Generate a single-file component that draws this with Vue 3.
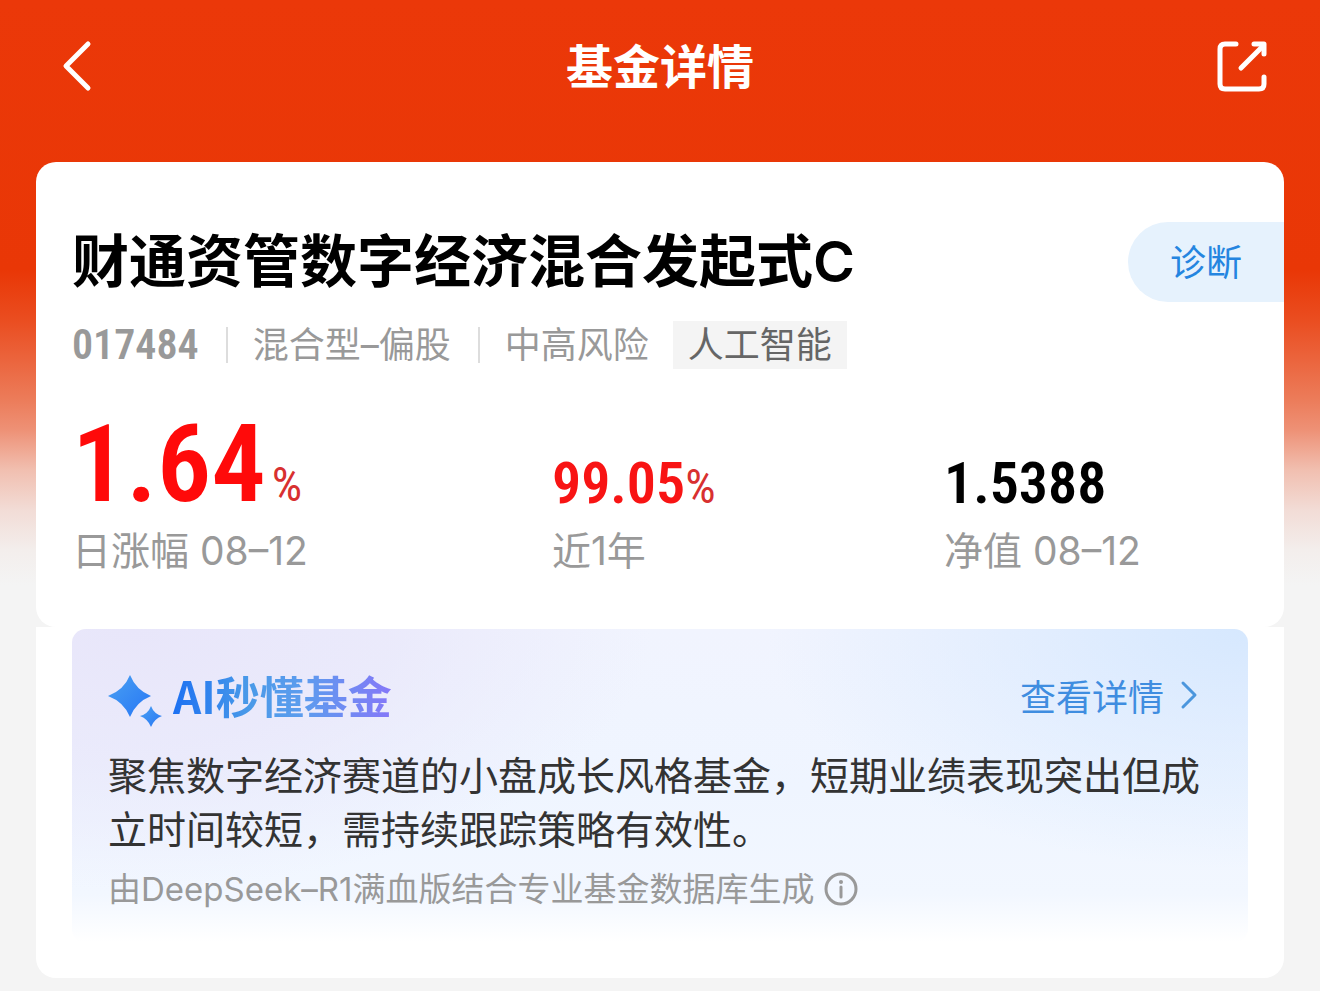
<script setup>
const fund = {
  name: '财通资管数字经济混合发起式C',
  code: '017484',
  type: '混合型–偏股',
  risk: '中高风险',
  theme: '人工智能',
}
const summary = '聚焦数字经济赛道的小盘成长风格基金，短期业绩表现突出但成立时间较短，需持续跟踪策略有效性。'
</script>

<template>
  <div class="page">
    <header class="bar">
      <button class="icon-btn back" type="button" aria-label="返回">
        <svg width="32" height="54" viewBox="0 0 32 54" fill="none" stroke="#fff" stroke-width="5" stroke-linecap="round" stroke-linejoin="round">
          <path d="M28 4 L6 26 L28 48" />
        </svg>
      </button>
      <h1>基金详情</h1>
      <button class="icon-btn share" type="button" aria-label="分享">
        <svg width="54" height="54" viewBox="0 0 54 54" fill="none" stroke="#fff" stroke-width="5" stroke-linecap="round" stroke-linejoin="round">
          <path d="M20 4 H9 Q4 4 4 9 V44 Q4 49 9 49 H43 Q48 49 48 44 V37" />
          <path d="M38 4 H48 V14" />
          <path d="M25 28 L47 6" />
        </svg>
      </button>
    </header>

    <main>
      <section class="card">
        <div class="title-row">
          <h2>{{ fund.name }}</h2>
          <button class="diagnose" type="button">诊断</button>
        </div>
        <div class="meta">
          <span class="code">{{ fund.code }}</span>
          <span class="field">{{ fund.type }}</span>
          <span class="field">{{ fund.risk }}</span>
          <span class="tag">{{ fund.theme }}</span>
        </div>
        <dl class="stats">
          <div class="stat">
            <dt>日涨幅 08–12</dt>
            <dd class="up big">1.64<span class="pct">%</span></dd>
          </div>
          <div class="stat">
            <dt>近1年</dt>
            <dd class="up">99.05<span class="pct">%</span></dd>
          </div>
          <div class="stat">
            <dt>净值 08–12</dt>
            <dd>1.5388</dd>
          </div>
        </dl>
      </section>

      <section class="ai-card">
        <div class="panel">
          <div class="panel-head">
            <svg class="spark" width="56" height="56" viewBox="0 0 56 56">
              <defs>
                <linearGradient id="spark" x1="0" y1="0" x2="1" y2="1">
                  <stop offset="0" stop-color="#4aa0f2" />
                  <stop offset="1" stop-color="#2676f5" />
                </linearGradient>
              </defs>
              <path fill="url(#spark)" d="M22 4 Q28 19 43 25 Q28 31 22 46 Q16 31 0 25 Q16 19 22 4Z" />
              <path fill="url(#spark)" d="M43 35 Q46 43 54 45 Q46 48 43 56 Q40 48 32 45 Q40 43 43 35Z" />
            </svg>
            <h3>AI秒懂基金</h3>
            <a class="more" href="#">
              查看详情
              <svg width="18" height="30" viewBox="0 0 18 30" fill="none" stroke="#4b96dd" stroke-width="3" stroke-linecap="round" stroke-linejoin="round">
                <path d="M3 3 L15 15 L3 27" />
              </svg>
            </a>
          </div>
          <p class="summary">{{ summary }}</p>
          <p class="source">
            由DeepSeek–R1满血版结合专业基金数据库生成
            <button class="info" type="button" aria-label="说明">
              <svg width="34" height="34" viewBox="0 0 34 34" fill="none" stroke="#999" stroke-width="3">
                <circle cx="17" cy="17" r="15" />
                <path d="M17 15 V25" stroke-linecap="round" />
                <circle cx="17" cy="10" r="2" fill="#999" stroke="none" />
              </svg>
            </button>
          </p>
        </div>
      </section>
    </main>
  </div>
</template>

<style>
body {
  margin: 0;
  background: #f4f4f4;
}
</style>

<style scoped>
.page {
  font-family: Inter, "Noto Sans CJK SC", sans-serif;
  background: linear-gradient(180deg, #eb3809 0, #e93706 270px, #ea4d20 320px, #ec7c5a 400px, #ee9176 430px, #f1bfb0 470px, #f2dcd6 510px, #f3eeec 550px, #f4f4f4 585px);
  color: #000;
  padding-bottom: 13px;
}
h1, h2, h3, p, dl, dd {
  margin: 0;
}
button {
  font: inherit;
  border: 0;
  padding: 0;
  background: none;
  cursor: pointer;
}
.icon-btn svg,
.info svg {
  display: block;
}
.bar {
  display: grid;
  grid-template-columns: 1fr auto 1fr;
  align-items: center;
  height: 134px;
  padding: 0 50px;
}
.back {
  justify-self: start;
  padding-left: 10px;
}
.share {
  justify-self: end;
}
h1 {
  font-size: 47px;
  line-height: 64px;
  font-weight: 700;
  color: #fff;
}
main {
  padding: 28px 36px 0;
}
.card {
  background: #fff;
  border-radius: 20px;
  padding: 60px 0 52px 36px;
}
.title-row {
  display: flex;
  align-items: center;
  justify-content: space-between;
}
h2 {
  font-size: 57px;
  line-height: 80px;
  font-weight: 600;
}
.diagnose {
  height: 80px;
  padding: 0 42px 4px;
  border-radius: 40px 0 0 40px;
  background: #e6f2fd;
  color: #2485e0;
  font-size: 36px;
}
.meta {
  display: flex;
  align-items: center;
  margin-top: 19px;
  font-size: 36px;
  line-height: 48px;
  color: #999;
}
.code {
  font-family: "Roboto Condensed", Roboto, sans-serif;
  font-weight: 600;
  font-size: 42px;
}
.field {
  position: relative;
  margin-left: 54px;
}
.field::before {
  content: "";
  position: absolute;
  left: -27px;
  top: 6px;
  width: 2px;
  height: 36px;
  background: #ddd;
}
.tag {
  margin-left: 24px;
  padding: 0 15px;
  background: #f4f4f4;
  color: #666;
}
.stats {
  display: grid;
  grid-template-columns: 480fr 392fr 340fr;
  margin-top: 32px;
}
.stat {
  display: flex;
  flex-direction: column-reverse;
}
dt {
  font-size: 39px;
  line-height: 48px;
  color: #999;
}
dd {
  font-family: "Roboto Condensed", Roboto, sans-serif;
  font-weight: 600;
  font-size: 58px;
  line-height: 88px;
}
.up {
  color: #f81414;
}
.big {
  font-size: 108px;
  line-height: 126px;
  color: #ff0a0a;
}
.pct {
  font-size: 48px;
  line-height: 1;
  font-weight: 400;
  color: #d83030;
}
.big .pct {
  margin-left: 6px;
}
.ai-card {
  background: #fff;
  border-radius: 0 0 20px 20px;
  padding: 2px 36px 36px;
}
.panel {
  padding: 34px 36px 29px;
  border-radius: 14px;
  background:
    radial-gradient(ellipse 520px 260px at 5% 0, #e8e6fa 0, rgba(232, 230, 250, 0.7) 50%, rgba(232, 230, 250, 0) 100%),
    radial-gradient(ellipse 480px 240px at 100% 0, #d6e8fe 0, rgba(214, 232, 254, 0) 100%),
    linear-gradient(180deg, #f1f4fe 0, #eff5ff 160px, #f2f7ff 265px, #fff 100%);
}
.panel-head {
  display: flex;
  align-items: center;
  height: 64px;
}
.spark {
  align-self: flex-end;
}
h3 {
  margin-left: 9px;
  font-family: "Noto Sans CJK SC", sans-serif;
  font-size: 44px;
  line-height: 60px;
  font-weight: 700;
  color: transparent;
  background: linear-gradient(90deg, #1d71f2 0, #4a9ae8 35%, #5d9cee 60%, #8577f8 100%);
  background-clip: text;
}
.more {
  display: flex;
  align-items: center;
  gap: 16px;
  margin-left: auto;
  padding-right: 14px;
  font-size: 36px;
  color: #3f8de0;
  text-decoration: none;
}
.summary {
  margin-top: 22px;
  font-size: 39px;
  line-height: 54px;
  color: #333;
}
.source {
  display: flex;
  align-items: center;
  gap: 10px;
  margin-top: 8px;
  font-size: 33px;
  line-height: 48px;
  color: #999;
}
</style>
